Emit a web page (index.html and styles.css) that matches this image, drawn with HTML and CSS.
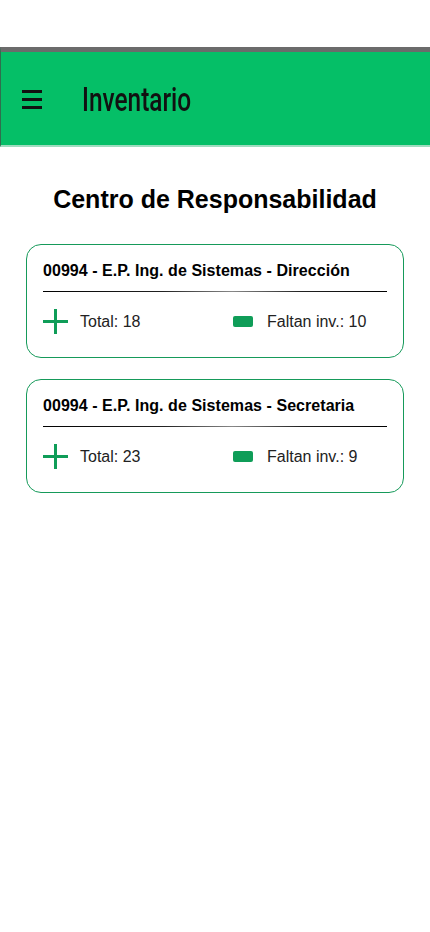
FILE: index.html
```html
<!DOCTYPE html>
<html lang="es">
<head>
<meta charset="utf-8">
<title>Inventario</title>
<link rel="stylesheet" href="styles.css">
</head>
<body>
<div class="top-space"></div>
<header class="appbar">
  <svg class="menu" width="20" height="21" viewBox="0 0 20 21" aria-hidden="true">
    <rect x="0" y="1" width="20" height="3" fill="#111"/>
    <rect x="0" y="9" width="20" height="3" fill="#111"/>
    <rect x="0" y="17" width="20" height="3" fill="#111"/>
  </svg>
  <span class="appbar-title">Inventario</span>
</header>
<main class="content">
  <h1 class="page-title">Centro de Responsabilidad</h1>
  <section class="card">
    <h2 class="card-title">00994 - E.P. Ing. de Sistemas - Dirección</h2>
    <div class="divider"></div>
    <div class="stats">
      <div class="stat stat-total">
        <svg class="plus" width="25" height="25" viewBox="0 0 25 25" aria-hidden="true">
          <rect x="11" y="0" width="3" height="25" fill="#0f9d58"/>
          <rect x="0" y="11" width="25" height="3" fill="#0f9d58"/>
        </svg>
        <span>Total: 18</span>
      </div>
      <div class="stat">
        <span class="chip"></span>
        <span>Faltan inv.: 10</span>
      </div>
    </div>
  </section>
  <section class="card">
    <h2 class="card-title">00994 - E.P. Ing. de Sistemas - Secretaria</h2>
    <div class="divider"></div>
    <div class="stats">
      <div class="stat stat-total">
        <svg class="plus" width="25" height="25" viewBox="0 0 25 25" aria-hidden="true">
          <rect x="11" y="0" width="3" height="25" fill="#0f9d58"/>
          <rect x="0" y="11" width="25" height="3" fill="#0f9d58"/>
        </svg>
        <span>Total: 23</span>
      </div>
      <div class="stat">
        <span class="chip"></span>
        <span>Faltan inv.: 9</span>
      </div>
    </div>
  </section>
</main>
</body>
</html>
```
FILE: styles.css
```css
html, body {
  margin: 0;
  padding: 0;
  background: #fff;
}
body {
  font-family: "Liberation Sans", Arial, sans-serif;
  color: #000;
  width: 430px;
}
.top-space {
  height: 47px;
}
.appbar {
  height: 93px;
  background: #05bf67;
  border-top: 5px solid #6b6b6b;
  border-bottom: 2px solid #9fdcbf;
  border-left: 1px solid #2f6e4e;
  display: flex;
  align-items: center;
  padding-left: 21px;
}
.menu {
  display: block;
  margin-top: 2px;
}
.appbar-title {
  font-family: Roboto, "Liberation Sans", sans-serif;
  font-size: 33px;
  font-weight: 500;
  color: #111;
  margin-left: 40px;
  margin-top: 1px;
  transform: scaleX(0.74);
  transform-origin: left center;
  filter: blur(0.5px);
}
.content {
  padding: 38px 26px 0 26px;
}
.page-title {
  margin: 0 0 31px 0;
  font-size: 25px;
  line-height: 28px;
  font-weight: bold;
  text-align: center;
}
.card {
  border: 1px solid #169a5a;
  border-radius: 15px;
  padding: 16px 16px 23px 16px;
  margin-bottom: 21px;
}
.card-title {
  margin: 0;
  font-size: 16px;
  line-height: 20px;
  font-weight: bold;
  letter-spacing: 0.05px;
}
.divider {
  height: 1px;
  margin-top: 10px;
  background: linear-gradient(to right, #000 0%, #222 35%, #888 55%, #222 75%, #000 100%);
}
.stats {
  display: flex;
  align-items: center;
  margin-top: 17px;
  font-size: 16px;
  color: #222;
}
.stat {
  display: flex;
  align-items: center;
  height: 25px;
}
.stat-total {
  width: 190px;
}
.plus {
  display: block;
  margin-right: 12px;
}
.chip {
  display: block;
  width: 20px;
  height: 11px;
  border-radius: 2px;
  background: #0f9d58;
  margin-right: 14px;
}
```
